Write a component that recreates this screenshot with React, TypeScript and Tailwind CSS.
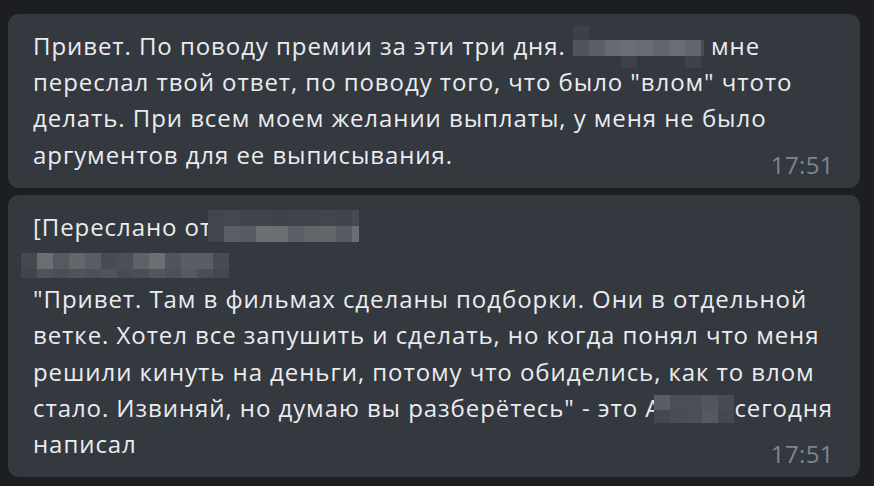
type Cell = [number, number, number, number, string];

function Pixelated({
  width,
  height,
  cells,
  className,
}: {
  width: number;
  height: number;
  cells: Cell[];
  className?: string;
}) {
  return (
    <svg
      width={width}
      height={height}
      viewBox={`0 0 ${width} ${height}`}
      className={`inline-block overflow-visible ${className ?? ""}`}
      aria-hidden="true"
    >
      {cells.map(([x, y, w, h, fill], i) => (
        <rect key={i} x={x} y={y} width={w} height={h} fill={fill} />
      ))}
    </svg>
  );
}

// blurred name after "дня."
const nameBlur: Cell[] = [
  [0, -14, 16, 14, "#3c4047"],
  [0, 0, 16, 16, "#50545b"],
  [16, 0, 16, 16, "#5c6066"],
  [32, 0, 16, 16, "#676b71"],
  [48, 0, 16, 16, "#6b6f75"],
  [64, 0, 16, 16, "#686c72"],
  [80, 0, 16, 16, "#62666c"],
  [96, 0, 16, 16, "#6a6e74"],
  [112, 0, 16, 16, "#63676d"],
  [128, 0, 3, 16, "#4a4e55"],
  [48, 16, 16, 12, "#3d4148"],
  [112, 16, 16, 12, "#3e4249"],
];

// forwarded-from name
const fwdTop = ["#41454c", "#43474e", "#40444b", "#3f434a", "#3e424a", "#40444b", "#3f434a", "#41454c", "#40444b", "#464a51"];
const fwdBottom = ["#41454c", "#5b5f65", "#575b61", "#6c7075", "#6a6e73", "#5c6066", "#62666b", "#63676c", "#575b61", "#6a6e73"];
const fwdBlur: Cell[] = [
  ...fwdTop.map((c, i): Cell => [i * 16, 0, i === 9 ? 7 : 16, 16, c]),
  ...fwdBottom.map((c, i): Cell => [i * 16, 16, i === 9 ? 7 : 16, 16, c]),
];

// second header line (date / signature)
const lineTop = ["#44484f", "#6a6e73", "#565a60", "#63676c", "#5a5e64", "#474b52", "#4b4f56", "#5e6268", "#6b6f74", "#50545b", "#5a5e64", "#5a5e64", "#474b52"];
const lineBottom = ["#40444b", "#4f535a", "#4a4e55", "#50545a", "#4d5157", "#50545a", "#474b52", "#4a4e55", "#53575d", "#4d5157", "#565a60", "#4a4e55", "#43474e"];
const lineBlur: Cell[] = [
  ...lineTop.map((c, i): Cell => [i * 16, 0, 16, 16, c]),
  ...lineBottom.map((c, i): Cell => [i * 16, 16, 16, 9, c]),
];

// name before "сегодня"
const smallTop = ["#5a5e64", "#4a4e55", "#4a4e55", "#52565c", "#474b52"];
const smallBottom = ["#44484f", "#484c53", "#4a4e55", "#565a60", "#44484f"];
const smallBlur: Cell[] = [
  ...smallTop.map((c, i): Cell => [i * 16, 0, 16, 15, c]),
  ...smallBottom.map((c, i): Cell => [i * 16, 15, 16, 13, c]),
];

function Bubble({ children }: { children: React.ReactNode }) {
  return (
    <div className="ml-2 w-[852px] rounded-[11px] bg-[#34383f] pb-[11px] pl-[25px] pr-[26px] pt-[14px]">
      {children}
      <div className="-mt-[20px] text-right leading-[24px] tracking-[0.4px] text-[#7e858e]">17:51</div>
    </div>
  );
}

export default function App() {
  return (
    <div
      className="flex h-[486px] w-[874px] flex-col gap-[7px] overflow-hidden bg-[#1c1e22] pt-[14px] text-[24px] leading-[36.2px] tracking-[0.93px] text-[#eaecef]"
      style={{ fontFamily: '"Open Sans", "Noto Sans", sans-serif' }}
    >
      <Bubble>
        <div className="whitespace-nowrap">
          Привет. По поводу премии за эти три дня.{" "}
          <Pixelated width={131} height={16} cells={nameBlur} className="align-[-1px]" />{" "}
          мне
        </div>
        <div className="whitespace-nowrap">переслал твой ответ, по поводу того, что было "влом" чтото</div>
        <div className="whitespace-nowrap">делать. При всем моем желании выплаты, у меня не было</div>
        <div className="whitespace-nowrap">аргументов для ее выписывания.</div>
      </Bubble>

      <Bubble>
        <div className="whitespace-nowrap">
          [Переслано от
          <Pixelated width={151} height={32} cells={fwdBlur} className="-ml-[4px] align-[-6px]" />
        </div>
        <div className="whitespace-nowrap">
          <Pixelated width={208} height={25} cells={lineBlur} className="-ml-[12px] align-[-6px]" />
        </div>
        <div className="whitespace-nowrap">"Привет. Там в фильмах сделаны подборки. Они в отдельной</div>
        <div className="whitespace-nowrap">ветке. Хотел все запушить и сделать, но когда понял что меня</div>
        <div className="whitespace-nowrap">решили кинуть на деньги, потому что обиделись, как то влом</div>
        <div className="whitespace-nowrap">
          стало. Извиняй, но думаю вы разберётесь" - это А
          <Pixelated width={80} height={28} cells={smallBlur} className="-ml-[7px] align-[-6px]" />
          сегодня
        </div>
        <div className="whitespace-nowrap">написал</div>
      </Bubble>
    </div>
  );
}
